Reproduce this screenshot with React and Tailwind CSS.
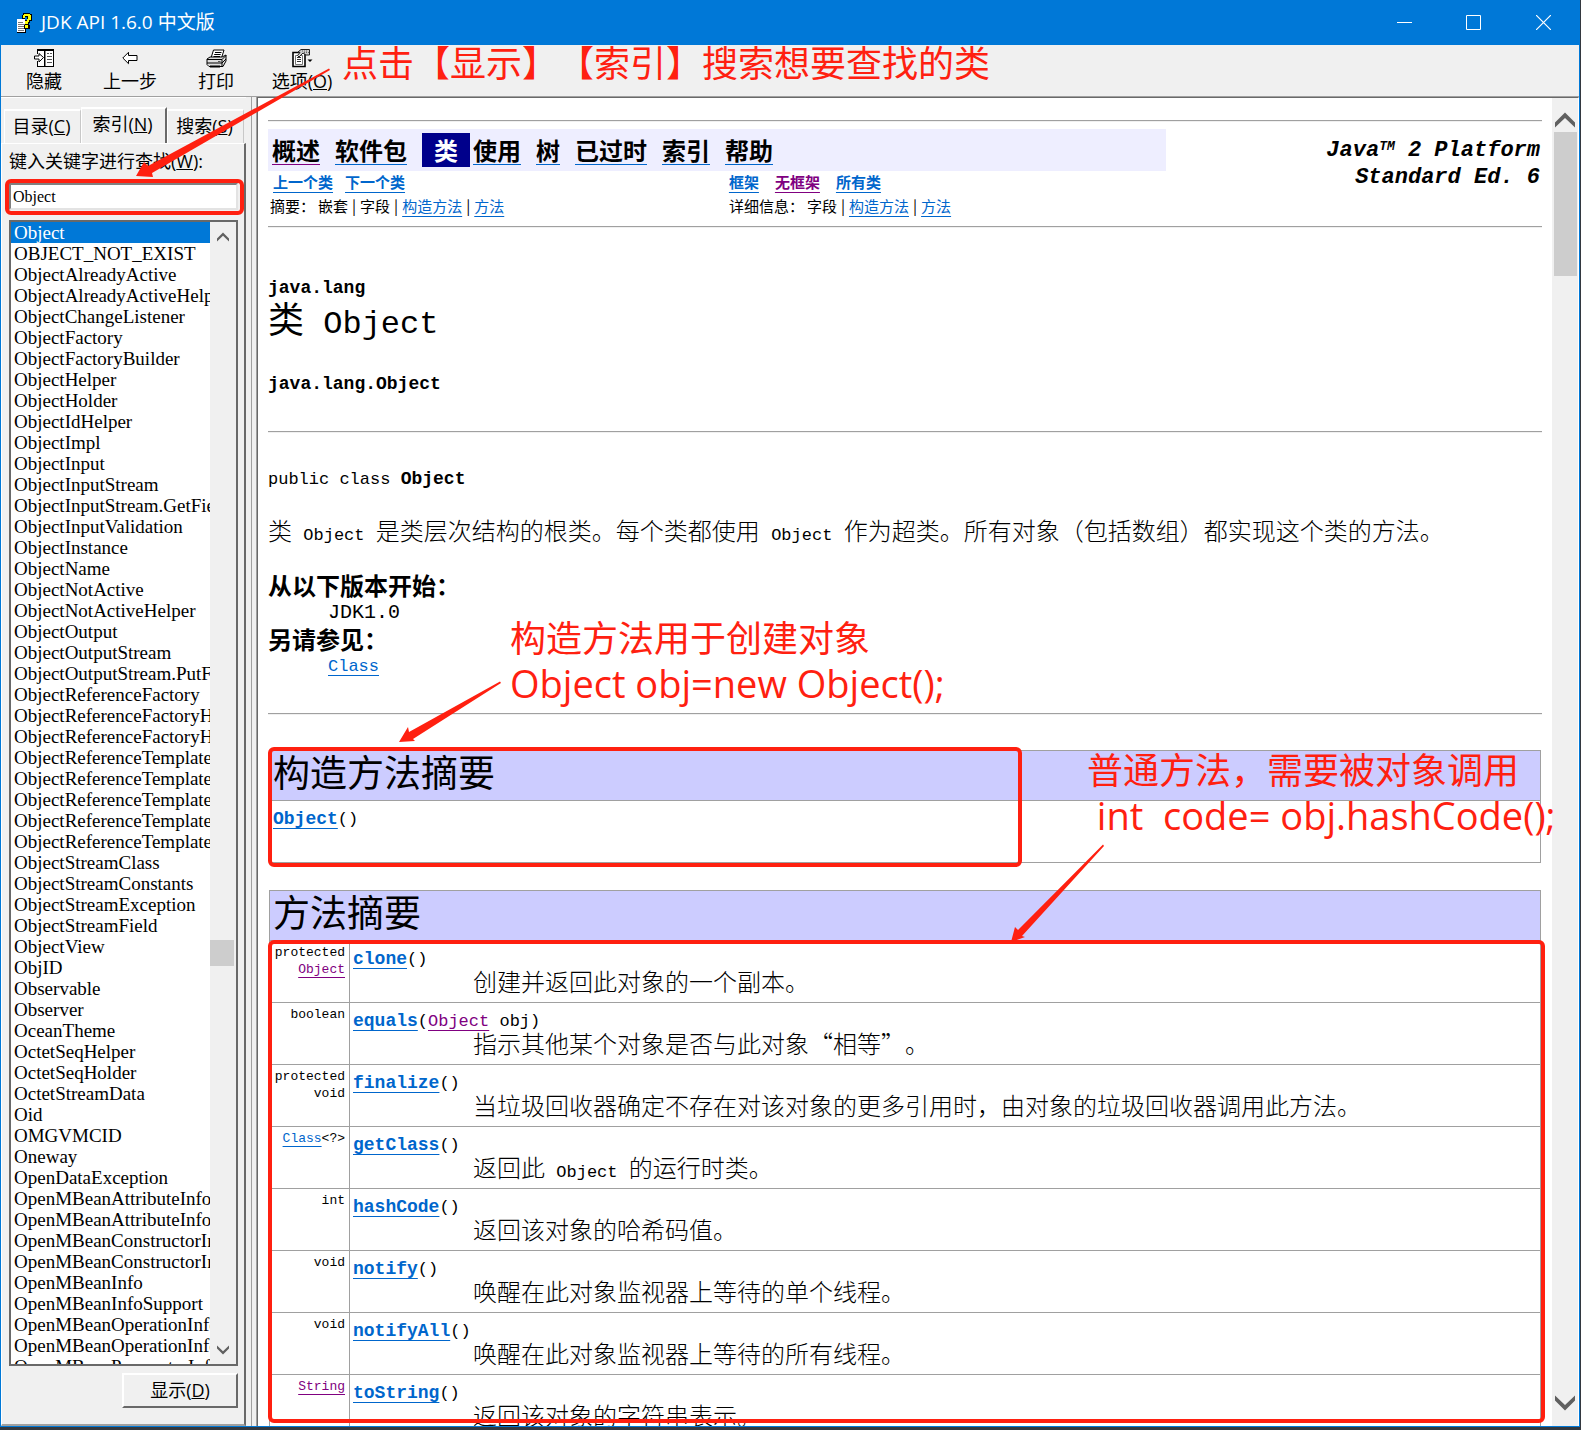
import React from "react";

const UI = "font-['Open_Sans','Noto_Sans_CJK_SC',sans-serif]";
const DOC = "font-['Noto_Sans_CJK_SC',sans-serif]";
const MONO = "font-['Liberation_Mono','Noto_Sans_CJK_SC',monospace]";

const ENTRIES = [
  "Object", "OBJECT_NOT_EXIST", "ObjectAlreadyActive", "ObjectAlreadyActiveHelper",
  "ObjectChangeListener", "ObjectFactory", "ObjectFactoryBuilder", "ObjectHelper",
  "ObjectHolder", "ObjectIdHelper", "ObjectImpl", "ObjectInput", "ObjectInputStream",
  "ObjectInputStream.GetField", "ObjectInputValidation", "ObjectInstance", "ObjectName",
  "ObjectNotActive", "ObjectNotActiveHelper", "ObjectOutput", "ObjectOutputStream",
  "ObjectOutputStream.PutField", "ObjectReferenceFactory", "ObjectReferenceFactoryHelper",
  "ObjectReferenceFactoryHolder", "ObjectReferenceTemplate", "ObjectReferenceTemplateHelper",
  "ObjectReferenceTemplateHolder", "ObjectReferenceTemplateSeqHelper",
  "ObjectReferenceTemplateSeqHolder", "ObjectStreamClass", "ObjectStreamConstants",
  "ObjectStreamException", "ObjectStreamField", "ObjectView", "ObjID", "Observable",
  "Observer", "OceanTheme", "OctetSeqHelper", "OctetSeqHolder", "OctetStreamData", "Oid",
  "OMGVMCID", "Oneway", "OpenDataException", "OpenMBeanAttributeInfo",
  "OpenMBeanAttributeInfoSupport", "OpenMBeanConstructorInfo",
  "OpenMBeanConstructorInfoSupport", "OpenMBeanInfo", "OpenMBeanInfoSupport",
  "OpenMBeanOperationInfo", "OpenMBeanOperationInfoSupport", "OpenMBeanParameterInfo",
];

function Link({ children, visited, className = "" }) {
  return (
    <a
      href="#"
      className={`underline decoration-1 underline-offset-4 ${visited ? "text-[#800080]" : "text-[#0066cc]"} ${className}`}
    >
      {children}
    </a>
  );
}

function Code({ children }) {
  return <code className={`mx-1.5 text-[17px] leading-none ${MONO}`}>{children}</code>;
}

const METHODS = [
  { type: <>protected<br /><Link visited>Object</Link></>, name: "clone", args: "()", text: "创建并返回此对象的一个副本。" },
  { type: "boolean", name: "equals", args: <>(<Link visited>Object</Link> obj)</>, text: "指示其他某个对象是否与此对象“相等”。" },
  { type: <>protected<br />void</>, name: "finalize", args: "()", text: "当垃圾回收器确定不存在对该对象的更多引用时，由对象的垃圾回收器调用此方法。" },
  { type: <><Link>Class</Link>&lt;?&gt;</>, name: "getClass", args: "()", text: <>返回此 <Code>Object</Code> 的运行时类。</> },
  { type: "int", name: "hashCode", args: "()", text: "返回该对象的哈希码值。" },
  { type: "void", name: "notify", args: "()", text: "唤醒在此对象监视器上等待的单个线程。" },
  { type: "void", name: "notifyAll", args: "()", text: "唤醒在此对象监视器上等待的所有线程。" },
  { type: <Link visited>String</Link>, name: "toString", args: "()", text: "返回该对象的字符串表示。" },
];

function Rule({ className = "" }) {
  return <hr className={`h-0.5 border-0 border-t border-[#a0a0a0] bg-[#f0f0f0] ${className}`} />;
}

function Chevron({ up, size }) {
  return (
    <svg width={size} height={size} viewBox="0 0 20 20" aria-hidden="true">
      <path
        d={up ? "M0 12.5 10 2.5 20 12.5V17.5L10 8 0 17.5Z" : "M0 2.5 10 12 20 2.5V7.5L10 17.5 0 7.5Z"}
        fill="#606060"
      />
    </svg>
  );
}

function HelpBookIcon() {
  return (
    <svg width="17" height="22" viewBox="0 0 17 22" shapeRendering="crispEdges" aria-hidden="true">
      <path d="M1 7h8v13H1z" fill="#fff" />
      <path d="M1 20h9v1H1zM9 16h1v5H9z" fill="#000" />
      <path d="M2 10h5v1H2zM2 12h7v1H2zM2 14h7v1H2zM2 16h6v1H2zM2 18h6v1H2z" fill="#777" />
      <path d="M7 1h7v1h2v7h-2v2h-1v2h1v4H8v-4h1V8h2V5H9v2H6V3h1z" fill="#000" />
      <path d="M8 2h6v1h1v5h-2v2h-1v2H9V9h2V7h1V4H9v2H7V3h1z" fill="#ff0" />
      <path d="M9 13h3v3H9z" fill="#ff0" />
    </svg>
  );
}

function HideIcon() {
  return (
    <svg width="21" height="19" viewBox="0 0 21 19" shapeRendering="crispEdges" aria-hidden="true">
      <path d="M3 1h16v17H3z" fill="#fff" />
      <path d="M3 0h17v2H3zM19 0h1v18h-1zM3 17h17v1H3zM3 0h1v5H3zM3 12h1v6H3zM10 1h1v17h-1z" fill="#000" />
      <path d="M11 2h1v15h-1z" fill="#888" />
      <path d="M13 4h2v1h-2zM13 7h5v1h-5zM13 10h5v1h-5zM13 13h5v1h-5zM16 4h2v1h-2z" fill="#555" />
      <path d="M.5 7H5V4.500l4.500 4-4.500 4.500v-3H.5z" fill="#fff" stroke="#000" shapeRendering="auto" />
    </svg>
  );
}

function BackIcon() {
  return (
    <svg width="16" height="14" viewBox="0 0 16 14" aria-hidden="true">
      <path d="M.8 7 6.500 1.300V4.500H15V9.500H6.500v3.200z" fill="#fff" stroke="#000" />
    </svg>
  );
}

function PrintIcon() {
  return (
    <svg width="21" height="19" viewBox="0 0 21 19" aria-hidden="true">
      <path d="M5 9 7.500 1H18l-2.500 8z" fill="#fff" stroke="#000" />
      <path d="M9 3.500h6.500M8.200 5.500h6.500M7.500 7.500H14" stroke="#000" />
      <path d="m1 10 3-2h12l4-2v6l-3 5.500H3l-2-2z" fill="#ddd" stroke="#000" />
      <path d="M1 10.500h15l4-4M16 10.500V17M1 14h15l4-4" fill="none" stroke="#000" />
      <path d="M4 17.500h10" stroke="#000" strokeWidth="2" />
      <path d="M12 12.500h2.500" stroke="#555" />
    </svg>
  );
}

function OptionsIcon() {
  return (
    <svg width="21" height="19" viewBox="0 0 21 19" aria-hidden="true">
      <path d="M1 3.500h12v14H1z" fill="#fff" stroke="#000" strokeWidth="1.600" />
      <path d="M3.500 6.500h7v9h-7z" fill="none" stroke="#777" />
      <path d="M5 8.500h4M5 10.500h4M5 12.500h4" stroke="#333" />
      <path d="m6 3 3-2.500h8.500V6H14l-3-2-4 4-1.500-1.500L8 3.500z" fill="#ccc" stroke="#222" />
      <path d="M10 2h6M12 3.500h5" stroke="#666" strokeDasharray="1 1" />
      <path d="M15.500 10.500h5L18 13z" fill="#000" />
    </svg>
  );
}

function ToolButton({ icon, children }) {
  return (
    <button type="button" className="flex w-[86px] flex-col items-center whitespace-nowrap">
      <span className="flex h-[26px] items-center">{icon}</span>
      <span className="text-[18px] leading-5">{children}</span>
    </button>
  );
}

function Tab({ active, children }) {
  return (
    <button
      type="button"
      role="tab"
      aria-selected={!!active}
      className={`border-t-2 border-l border-white text-[18px] whitespace-nowrap ${
        active
          ? "-mb-px h-[37px] w-[86px] border-r-2 border-r-[#696969] bg-[#f0f0f0] pr-0.5 pb-1"
          : "h-[34px] w-[77px] border-r border-r-[#c8c8c8] pr-0.5 pb-0.5"
      }`}
    >
      {children}
    </button>
  );
}

function TitleBar() {
  return (
    <header className="flex h-[45px] shrink-0 items-center bg-[#0078d7] pl-[15px] text-white">
      <HelpBookIcon />
      <h1 className="ml-2 flex-1 text-[19px]">JDK API 1.6.0 中文版</h1>
      <button type="button" aria-label="Minimize" className="flex h-full w-[69px] items-center justify-center">
        <svg width="15" height="15" aria-hidden="true"><path d="M0 7.500h15" stroke="#fff" /></svg>
      </button>
      <button type="button" aria-label="Maximize" className="flex h-full w-[69px] items-center justify-center">
        <svg width="15" height="15" aria-hidden="true"><path d="M.5.5h14v14H.5z" fill="none" stroke="#fff" /></svg>
      </button>
      <button type="button" aria-label="Close" className="flex h-full w-[71px] items-center justify-center">
        <svg width="15" height="15" aria-hidden="true"><path d="m0 0 15 15M15 0 0 15" stroke="#fff" strokeWidth="1.200" /></svg>
      </button>
    </header>
  );
}

function Sidebar() {
  return (
    <aside className="mr-px flex w-[245px] shrink-0 flex-col border-t border-white pt-[9px]">
      <div role="tablist" className="flex items-end pl-[3px]">
        <Tab>目录(<u>C</u>)</Tab>
        <Tab active>索引(<u>N</u>)</Tab>
        <Tab>搜索(<u>S</u>)</Tab>
      </div>
      <div className="flex min-h-0 flex-1 flex-col border-t border-r-2 border-b-2 border-l border-t-white border-r-[#696969] border-b-[#a0a0a0] border-l-white pr-1.5 pb-4 pl-[7px]">
        <label htmlFor="keyword" className="h-[39px] text-[18px] leading-[34px]">
          键入关键字进行查找(<u>W</u>):
        </label>
        <input
          id="keyword"
          defaultValue="Object"
          className="h-[27px] border-2 border-t-[#808080] border-r-[#e3e3e3] border-b-[#e3e3e3] border-l-[#808080] bg-white px-0.5 font-['Liberation_Serif',serif] text-[16px] outline-none"
        />
        <div className="mt-2.5 flex min-h-0 flex-1 border-2 border-[#696969] bg-white">
          <ul
            role="listbox"
            aria-label="索引"
            className="min-w-0 flex-1 overflow-hidden font-['Liberation_Serif',serif] text-[19px] leading-[21px] whitespace-nowrap"
          >
            {ENTRIES.map((name, i) => (
              <li
                key={name}
                role="option"
                aria-selected={i === 0}
                className={`pl-[3px] ${i === 0 ? "bg-[#0078d7] text-white" : ""}`}
              >
                {name}
              </li>
            ))}
          </ul>
          <div className="flex w-[26px] flex-col items-center bg-[#f0f0f0] pt-[9px]">
            <button type="button" aria-label="Scroll up"><Chevron up size={12} /></button>
            <div className="mt-[697px] h-[26px] w-6 self-start bg-[#cdcdcd]" />
            <button type="button" aria-label="Scroll down" className="mt-auto pb-2"><Chevron size={12} /></button>
          </div>
        </div>
        <button
          type="button"
          className="mt-[7px] h-[35px] w-[116px] self-end border-2 border-t-white border-r-[#696969] border-b-[#696969] border-l-white text-[18px]"
        >
          显示(<u>D</u>)
        </button>
      </div>
    </aside>
  );
}

function NavLink({ children, visited }) {
  return (
    <a
      href="#"
      className={`text-black underline decoration-1 underline-offset-4 ${visited ? "decoration-[#800080]" : "decoration-[#0066cc]"}`}
    >
      {children}
    </a>
  );
}

function DocNav() {
  return (
    <nav className="mt-[7px]">
      <div className="flex justify-between">
        <div className="flex h-[42px] w-[70.5%] items-center gap-[15px] bg-[#eeeeff] pb-px pl-1 text-[24px] font-bold whitespace-nowrap">
          <NavLink visited>概述</NavLink>
          <NavLink>软件包</NavLink>
          <span className="flex items-center gap-[3px]">
            <span className="bg-[#00008b] px-3 leading-[34px] text-white">类</span>
            <NavLink>使用</NavLink>
          </span>
          <NavLink>树</NavLink>
          <NavLink>已过时</NavLink>
          <NavLink>索引</NavLink>
          <NavLink>帮助</NavLink>
        </div>
        <em className={`-mb-6 pt-2 pr-0.5 text-right text-[22px] leading-[27px] font-bold whitespace-nowrap ${MONO}`}>
          Java<sup className="text-[13px] leading-none">TM</sup> 2 Platform
          <br />
          Standard Ed. 6
        </em>
      </div>
      <div className="grid grid-cols-[36%_1fr] pl-0.5 text-[15px] leading-6">
        <div className="-mt-px flex gap-3 pl-[3px] font-bold">
          <Link>上一个类</Link>
          <Link>下一个类</Link>
        </div>
        <div className="-mt-px flex gap-4 pl-px font-bold">
          <Link>框架</Link>
          <Link visited>无框架</Link>
          <Link>所有类</Link>
        </div>
        <div className="flex">
          <span className="w-12">摘要：</span>
          <span className="flex gap-1">嵌套 <i className="not-italic">|</i> 字段 <i className="not-italic">|</i> <Link>构造方法</Link> <i className="not-italic">|</i> <Link>方法</Link></span>
        </div>
        <div className="flex pl-px">
          <span className="w-[78px]">详细信息：</span>
          <span className="flex gap-1">字段 <i className="not-italic">|</i> <Link>构造方法</Link> <i className="not-italic">|</i> <Link>方法</Link></span>
        </div>
      </div>
    </nav>
  );
}

const TABLE = "mx-px w-[calc(100%-2px)] border-collapse border border-[#a0a0a0]";
const HEADING = "border border-[#a0a0a0] px-[3px] pb-2.5 text-left text-[37px] leading-[38px] font-normal";

function DocPage() {
  return (
    <main className={`min-w-0 flex-1 overflow-hidden bg-white px-2.5 pt-[22px] ${DOC}`}>
      <Rule />
      <DocNav />
      <Rule className="mt-2" />
      <h2 className="mt-12">
        <span className={`block text-[18px] leading-6 font-bold ${MONO}`}>java.lang</span>
        <span className={`block pt-1 text-[32px] leading-[42px] ${MONO}`}><span className="text-[36px] leading-none">类</span> Object</span>
      </h2>
      <p className={`mt-[26px] text-[18px] leading-6 font-bold ${MONO}`}>java.lang.Object</p>
      <Rule className="mt-[35px]" />
      <p className={`mt-[35px] text-[17px] leading-6 ${MONO}`}>
        public class <b className="text-[18px] leading-none">Object</b>
      </p>
      <p className="mt-[22px] text-[24px] leading-8 font-light">
        类 <Code>Object</Code> 是类层次结构的根类。每个类都使用 <Code>Object</Code> 作为超类。所有对象（包括数组）都实现这个类的方法。
      </p>
      <dl className="mt-[25px] text-[24px] leading-[27px]">
        <dt className="font-bold">从以下版本开始：</dt>
        <dd className={`pt-0.5 pl-[60px] text-[20px] leading-[25px] ${MONO}`}>JDK1.0</dd>
        <dt className="font-bold">另请参见：</dt>
        <dd className={`pt-0.5 pl-[60px] text-[17px] leading-[25px] ${MONO}`}><Link>Class</Link></dd>
      </dl>
      <Rule className="mt-[34px]" />
      <table className={`mt-[35px] ${TABLE}`}>
        <thead>
          <tr className="h-[50px] bg-[#ccccff]">
            <th className={HEADING}>构造方法摘要</th>
          </tr>
        </thead>
        <tbody>
          <tr className="h-[62px] align-top">
            <td className={`px-[3px] pt-1.5 text-[17px] leading-6 ${MONO}`}>
              <Link className="text-[18px] font-bold">Object</Link>()
            </td>
          </tr>
        </tbody>
      </table>
      <table className={`mt-[27px] ${TABLE}`}>
        <thead>
          <tr className="h-[50px] bg-[#ccccff]">
            <th colSpan={2} className={HEADING}>方法摘要</th>
          </tr>
        </thead>
        <tbody>
          {METHODS.map((m) => (
            <tr key={m.name} className="h-[62px] align-top">
              <td className={`w-20 border border-[#a0a0a0] pt-[3px] pr-1 pl-0.5 text-right text-[13px] leading-[17px] ${MONO}`}>{m.type}</td>
              <td className="border border-[#a0a0a0] px-[3px] pt-[7px]">
                <div className={`text-[17px] leading-6 ${MONO}`}>
                  <Link className="text-[18px] leading-none font-bold">{m.name}</Link>{m.args}
                </div>
                <div className="-mt-1 pl-[120px] text-[24px] leading-[26px] font-light">{m.text}</div>
              </td>
            </tr>
          ))}
        </tbody>
      </table>
    </main>
  );
}

function Annotations() {
  return (
    <div className="pointer-events-none absolute inset-0 text-[36px] leading-[45px] whitespace-pre text-[#ff2010]">
      <div className="absolute top-[179px] left-1 h-9 w-[239px] rounded-md border-4 border-[#ff2010]" />
      <div className="absolute top-[747px] left-[267px] h-[120px] w-[754px] rounded-md border-4 border-[#ff2010]" />
      <div className="absolute top-[940px] right-[34px] bottom-[3px] left-[267px] rounded-md border-4 border-[#ff2010]" />
      <p className="absolute top-[41px] left-[341px]">点击【显示】【索引】搜索想要查找的类</p>
      <p className="absolute top-[616px] left-[509px]">构造方法用于创建对象<br /><span className="text-[38px]">Object obj=new Object();</span></p>
      <p className="absolute top-[748px] left-[1086px]">普通方法，需要被对象调用<br /><span className="text-[38px]"> int  code= obj.hashCode();</span></p>
      <svg className="absolute inset-0 h-full w-full" aria-hidden="true" fill="#ff2010">
        <path d="M328 68.500 329 70 151 173 152 177 135 176 143 162 147 166Z" />
        <path d="M499 681.500 500 683 412 739 414 741 398 742 407 727 408 732Z" />
        <path d="M1102 844.500 1103 846 1021 936 1024 937 1010 942 1014 927 1017 930Z" />
      </svg>
    </div>
  );
}

export default function App() {
  return (
    <div className={`h-screen overflow-hidden bg-[#33383f] pr-px pb-[3px] text-black [text-spacing-trim:space-all] ${UI}`}>
      <div className="relative flex h-full flex-col overflow-hidden border-r border-b border-l border-[#0078d7] bg-[#f0f0f0]">
        <TitleBar />
        <div role="toolbar" className="flex h-[52px] shrink-0 items-start border-b border-[#a0a0a0]">
          <ToolButton icon={<HideIcon />}>隐藏</ToolButton>
          <ToolButton icon={<BackIcon />}>上一步</ToolButton>
          <ToolButton icon={<PrintIcon />}>打印</ToolButton>
          <ToolButton icon={<OptionsIcon />}>选项(<u>O</u>)</ToolButton>
        </div>
        <div className="flex min-h-0 flex-1">
          <Sidebar />
          <div className="ml-1 w-1.5 shrink-0 border-r border-l border-[#a0a0a0] bg-[#f0f0f0]" />
          <div className="flex min-w-0 flex-1 border-t border-r border-l border-[#696969] border-r-white">
            <DocPage />
            <div className="flex w-[26px] shrink-0 flex-col items-center bg-[#f0f0f0] pt-3 pb-[13px]">
              <button type="button" aria-label="Scroll up"><Chevron up size={20} /></button>
              <div className="mt-0.5 h-36 w-[23px] bg-[#cdcdcd]" />
              <button type="button" aria-label="Scroll down" className="mt-auto"><Chevron size={20} /></button>
            </div>
          </div>
        </div>
        <Annotations />
      </div>
    </div>
  );
}
